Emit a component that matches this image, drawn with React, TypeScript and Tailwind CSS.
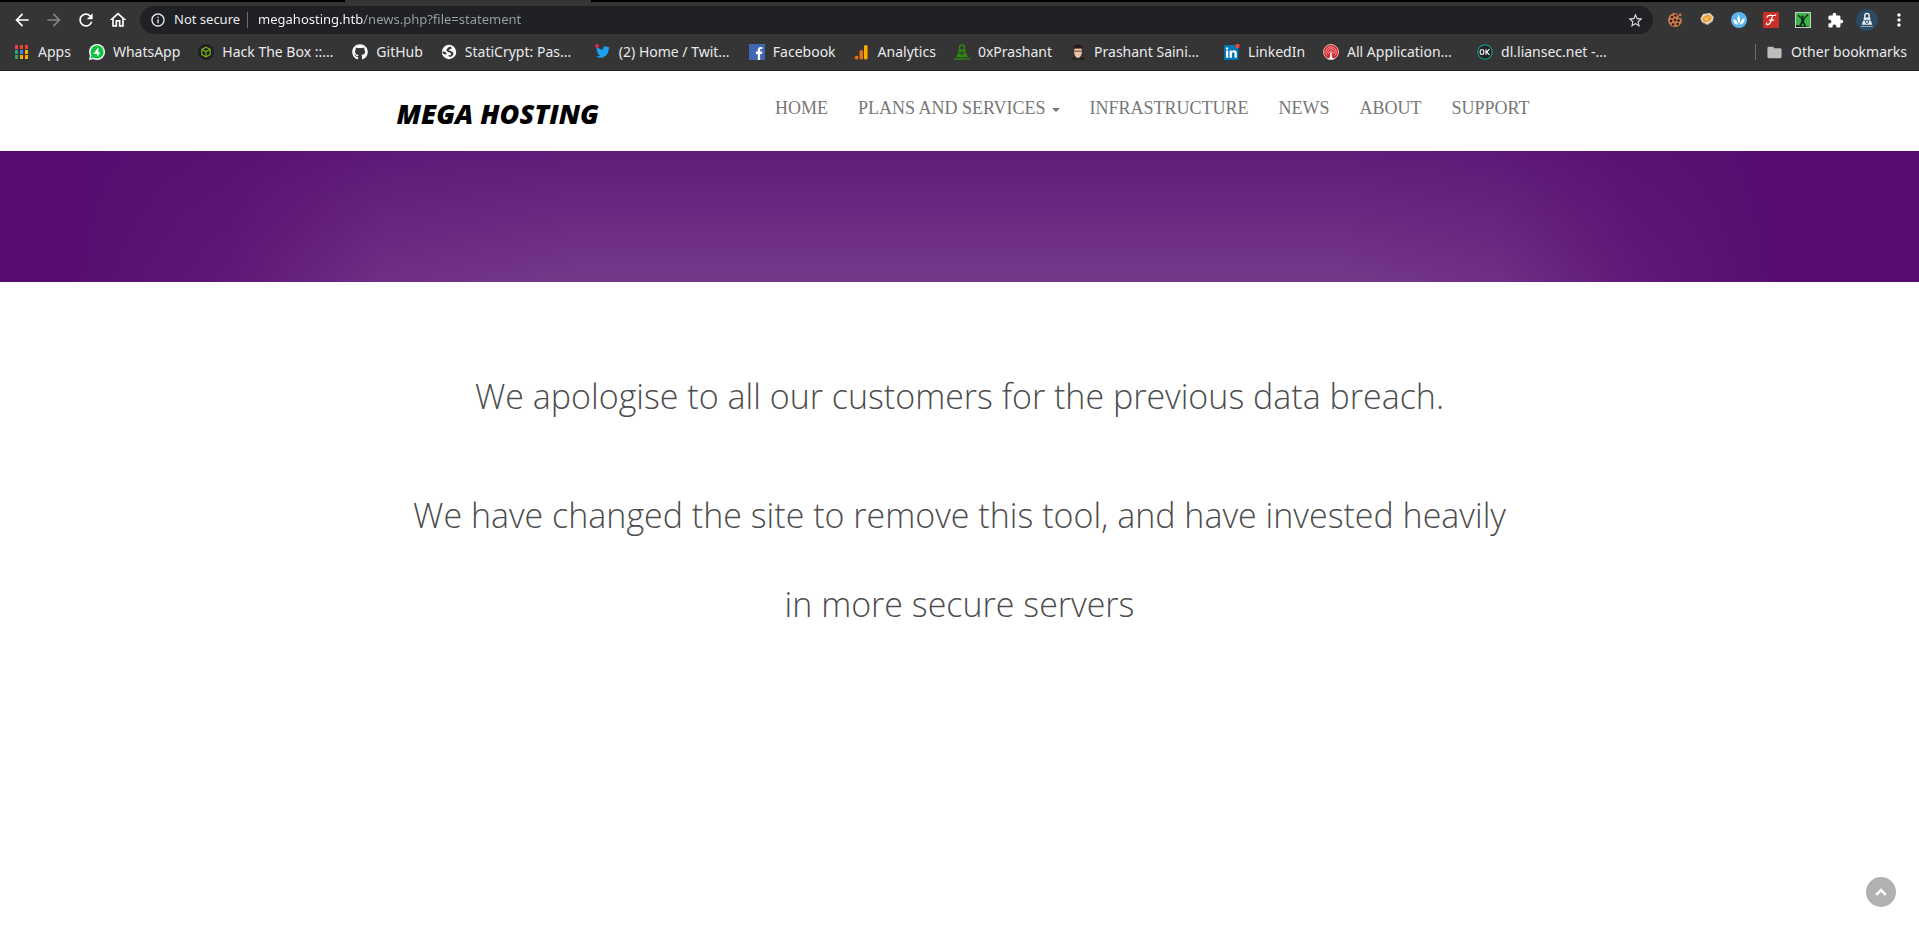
import type { ReactNode } from "react";
import {
  MdArrowBack,
  MdArrowForward,
  MdRefresh,
  MdOutlineHome,
  MdInfoOutline,
  MdStarBorder,
  MdExtension,
  MdMoreVert,
  MdFolder,
} from "react-icons/md";
import { FaGithub, FaTwitter } from "react-icons/fa";

function AppsIcon() {
  const cells = ["#ea4335", "#ea4335", "#ea4335", "#34a06b", "#4285f4", "#fbad05", "#34a06b", "#fbad05", "#fbad05"];
  return (
    <svg width="16" height="16" viewBox="0 0 16 16">
      {cells.map((c, i) => (
        <rect key={i} x={1 + (i % 3) * 5} y={1 + Math.floor(i / 3) * 5} width="3" height="4" fill={c} />
      ))}
    </svg>
  );
}

function WhatsAppIcon() {
  return (
    <svg width="16" height="16" viewBox="0 0 16 16">
      <circle cx="8" cy="8" r="8" fill="#fff" />
      <path d="M0 16l1-5 4 4z" fill="#fff" />
      <circle cx="8.1" cy="7.9" r="6.6" fill="#12c245" />
      <path d="M1.5 14.6l.8-3.6 2.6 2.8z" fill="#12c245" />
      <path d="M9.3 4.5L6 9.3h4.7M9 7.2v4.2" fill="none" stroke="#fff" strokeWidth="1.6" />
    </svg>
  );
}

function HackTheBoxIcon() {
  return (
    <svg width="16" height="16" viewBox="0 0 16 16">
      <circle cx="8" cy="8" r="8" fill="#1a212b" />
      <path d="M8 3.2l4.2 2.2v5.2L8 12.8l-4.2-2.2V5.4zM3.8 5.4L8 7.6l4.2-2.2M8 7.6v5.2" fill="none" stroke="#86b300" strokeWidth="1.1" />
    </svg>
  );
}

function GlobeIcon() {
  return (
    <svg width="16" height="16" viewBox="0 0 16 16">
      <circle cx="8" cy="8" r="7.2" fill="#fff" />
      <path d="M9.800 2.600L7.600 3.200 5.400 5.600l.6 2 2.600.8 1.800 1.200-1 1.600H7.200l.8 1.600 2.400-.4 2-2-.2-2-2.400-1.400-2-.4.4-1.200 2.400-.6z" fill="#353535" />
      <path d="M1.400 7.200l3 .8 1.600 2-1.600.6-2.600-1z" fill="#353535" />
    </svg>
  );
}

function TwitterIcon() {
  return (
    <span className="relative flex h-4 w-4 items-center justify-center">
      <FaTwitter size={14} color="#1da1f2" />
      <span className="absolute left-0 top-0 h-1 w-1 rounded-full bg-[#e0245e]" />
    </span>
  );
}

function FacebookIcon() {
  return (
    <svg width="16" height="16" viewBox="0 0 16 16">
      <rect width="16" height="16" fill="#4267b2" />
      <path d="M8.8 16V10H6.9V7.6h1.9V5.9c0-2 1.2-3 2.9-3 .8 0 1.5.1 1.7.1v2h-1.2c-.9 0-1.1.4-1.1 1.1v1.5h2.2L13 10h-1.9v6z" fill="#fff" />
    </svg>
  );
}

function AnalyticsIcon() {
  return (
    <svg width="16" height="16" viewBox="0 0 16 16">
      <circle cx="2.600" cy="13.600" r="1.900" fill="#e8710a" />
      <rect x="5.500" y="6" width="3.600" height="9.500" rx="1.600" fill="#e8710a" />
      <rect x="10" y="1" width="3.600" height="14.500" rx="1.600" fill="#f9ab00" />
    </svg>
  );
}

function LockPersonIcon({ color }: { color: string }) {
  return (
    <svg width="16" height="16" viewBox="0 0 16 16">
      <path d="M5.6 6V3.6a2.4 2.6 0 0 1 4.8 0V6" fill="none" stroke={color} strokeWidth="1.4" />
      <rect x="4.3" y="5.4" width="7.4" height="3.2" rx="1" fill={color} />
      <path d="M3.6 9.200h8.800l1.400 4H2.200z" fill={color} />
      <circle cx="8" cy="9.400" r="1.500" fill="none" stroke="#353535" strokeWidth=".9" />
      <path d="M0 15h16" stroke={color} strokeWidth="1.600" strokeDasharray="1.600 .3" />
    </svg>
  );
}

function PortraitIcon() {
  return (
    <svg width="16" height="16" viewBox="0 0 16 16">
      <path d="M1 16c.4-2.600 3-3 5-3.600h4c2 .6 4.600 1 5 3.600z" fill="#262626" />
      <path d="M4.200 4.500h7.600v4c0 2.500-2 5.500-3.800 5.500s-3.800-3-3.800-5.500z" fill="#f0c0a4" />
      <path d="M3.600 6.500V4C3.600 1.500 5.500.6 8 .6s4.400.9 4.400 3.400v2.500l-.9-2.300h-7z" fill="#2a1d19" />
      <path d="M4.200 7.200h7.600" stroke="#75605a" strokeWidth="1.300" />
    </svg>
  );
}

function LinkedInIcon() {
  return (
    <svg width="16" height="16" viewBox="0 0 16 16">
      <rect x="0" y="1" width="14.500" height="15" fill="#0077b5" />
      <path d="M2 6.500h2.300v7.200H2zM5.600 6.500h2.200v1c.5-.8 1.300-1.200 2.300-1.200 2 0 2.700 1.300 2.700 3.200v4.200h-2.300V10c0-1-.3-1.700-1.200-1.700-1 0-1.400.8-1.400 1.700v3.700H5.600z" fill="#fff" />
      <circle cx="3.100" cy="4.500" r="1.200" fill="#fff" />
      <rect x="11.500" width="4" height="4" rx="1" fill="#f0433a" />
    </svg>
  );
}

function SignalIcon() {
  return (
    <svg width="16" height="16" viewBox="0 0 16 16">
      <circle cx="8" cy="8" r="7.500" fill="#d7282f" stroke="#e8b6b6" />
      <g fill="none" stroke="#f6c9c9" strokeWidth=".7">
        <path d="M4.200 11.600a5.200 5.200 0 1 1 7.600 0" />
        <path d="M5.700 10a3.200 3.200 0 1 1 4.600 0" />
        <circle cx="8" cy="8" r="1.200" />
      </g>
      <path d="M7.400 8.500h1.200l.4 4.800 2.600 2H4.400l2.600-2z" fill="#fff" />
    </svg>
  );
}

function OkIcon() {
  return (
    <svg width="16" height="16" viewBox="0 0 16 16">
      <circle cx="8" cy="8" r="7.200" fill="#222" stroke="#0d9485" strokeWidth="1.200" />
      <rect x="3.200" y="5.700" width="3.600" height="4.600" rx="1.300" fill="none" stroke="#fff" strokeWidth="1.100" />
      <path d="M9 5.200v5.600M12.500 5.200L9.600 8l2.900 2.800" fill="none" stroke="#fff" strokeWidth="1.100" />
    </svg>
  );
}

function CookieIcon() {
  const chips = [[5, 5], [8.500, 3.500], [4, 9], [8, 8], [11.500, 8.500], [6, 12.500], [10.500, 12]];
  return (
    <svg width="16" height="16" viewBox="0 0 16 16">
      <path d="M9.500 1.200A7 7 0 1 0 15 8.500l-.8-2.300-2.400-.2-.3-2.400z" fill="#c77b4e" />
      <circle cx="13.200" cy="2.800" r="1.400" fill="#c77b4e" />
      {chips.map(([x, y]) => (
        <circle key={`${x}-${y}`} cx={x} cy={y} r="1.250" fill="#2d1b12" />
      ))}
    </svg>
  );
}

function BadgeIcon() {
  return (
    <svg width="16" height="16" viewBox="0 0 16 16">
      <path d="M1.500 6.500L4 2l7-1 3.800 4-1.300 4.500-5 3.500-5.500-2.500z" fill="#dfd8cf" />
      <ellipse cx="8" cy="6.500" rx="4.600" ry="3.400" fill="#f29a22" transform="rotate(-25 8 6.500)" />
      <path d="M5.500 8l5-3.200M5.500 5.500l3.500 3" stroke="#fbdca7" strokeWidth="1" />
      <path d="M3.500 10.500l5 2.500 4-3" fill="none" stroke="#8a6a4c" strokeWidth=".9" />
    </svg>
  );
}

function WaveIcon() {
  return (
    <svg width="16" height="16" viewBox="0 0 16 16">
      <circle cx="8" cy="8" r="8" fill="#5bb5ef" />
      <path d="M2.300 7.500c2.400 0 4 1.700 4.800 5.300-3.200-.3-4.800-2.200-4.800-5.300zM7.600 2.800c1.800 2.700 1.800 5.900.6 9.200C6 9 5.800 6 7.600 2.800zM13.700 6.300c0 3.700-1.700 6.100-5 6.500.5-3.300 2.200-5.800 5-6.500z" fill="#fff" />
    </svg>
  );
}

function ScriptFIcon() {
  return (
    <svg width="16" height="16" viewBox="0 0 16 16">
      <rect width="16" height="16" fill="#c93127" />
      <path d="M4 5.500c.2-2 2-2.300 4-2.100 2 .2 3.500.2 4.700-.5M9.500 3.500C8.500 8 8 12.500 4.800 12.700c-1.300 0-1.700-1-1-1.700M6.500 8.200h4.200" fill="none" stroke="#fff" strokeWidth="1.200" strokeLinecap="round" />
    </svg>
  );
}

function RunnerIcon() {
  return (
    <svg width="16" height="16" viewBox="0 0 16 16">
      <rect x=".5" y=".5" width="15" height="15" fill="#3ab54a" stroke="#c7cfc8" />
      <circle cx="7.500" cy="4.600" r="1.200" fill="#102414" />
      <path d="M3 3l3.600 3.600M9 6.600L13 2.500" fill="none" stroke="#102414" strokeWidth="1.200" />
      <path d="M6 6h3.600L9 10l2.600 4.500H9.800L7.600 11.200 6 13.800H4.200L6.300 9.600z" fill="#102414" />
      <path d="M1 15v-2l4 .6 5 .6 5 .8z" fill="#102414" />
    </svg>
  );
}

function ProfileIcon() {
  return (
    <span className="flex h-[22px] w-[22px] items-center justify-center rounded-full bg-[#2c4a62]">
      <svg width="16" height="16" viewBox="0 0 16 16">
        <path d="M5.800 6V3.800a2.200 2.400 0 0 1 4.400 0V6" fill="none" stroke="#fff" strokeWidth="1.300" />
        <rect x="4.600" y="5.400" width="6.800" height="2.600" rx="1" fill="#e6ebef" />
        <path d="M4.200 8.600h7.600l1.500 4.200H2.700z" fill="#e6ebef" />
        <circle cx="8" cy="9.800" r="1.600" fill="#e6ebef" stroke="#2c4a62" />
        <path d="M2 14.500h12" stroke="#b7c3cc" strokeWidth="1.200" strokeDasharray="1.400 .5" />
      </svg>
    </span>
  );
}

function ToolbarButton({ label, children }: { label: string; children: ReactNode }) {
  return (
    <button type="button" aria-label={label} className="flex h-7 w-8 shrink-0 items-center justify-center">
      {children}
    </button>
  );
}

type Bookmark = { label: string; icon: ReactNode; cut?: boolean };

const bookmarks: Bookmark[] = [
  { label: "Apps", icon: <AppsIcon /> },
  { label: "WhatsApp", icon: <WhatsAppIcon /> },
  { label: "Hack The Box ::...", icon: <HackTheBoxIcon />, cut: true },
  { label: "GitHub", icon: <FaGithub size={16} color="#fff" /> },
  { label: "StatiCrypt: Pas...", icon: <GlobeIcon />, cut: true },
  { label: "(2) Home / Twit...", icon: <TwitterIcon />, cut: true },
  { label: "Facebook", icon: <FacebookIcon /> },
  { label: "Analytics", icon: <AnalyticsIcon /> },
  { label: "0xPrashant", icon: <LockPersonIcon color="#2c8a0c" /> },
  { label: "Prashant Saini...", icon: <PortraitIcon />, cut: true },
  { label: "LinkedIn", icon: <LinkedInIcon /> },
  { label: "All Application...", icon: <SignalIcon />, cut: true },
  { label: "dl.liansec.net -...", icon: <OkIcon />, cut: true },
];

function BrowserBar() {
  return (
    <div className="border-b border-[#202124] bg-[#353535] font-['Noto_Sans',sans-serif]">
      <div className="flex h-[2px] bg-black">
        <div className="ml-[18%] w-[246px] bg-[#353535]" />
      </div>
      <div className="flex items-center pl-1.5 pr-1 pt-1">
        <ToolbarButton label="Back"><MdArrowBack size={20} color="#fff" /></ToolbarButton>
        <ToolbarButton label="Forward"><MdArrowForward size={20} color="#858585" /></ToolbarButton>
        <ToolbarButton label="Reload"><MdRefresh size={20} color="#fff" /></ToolbarButton>
        <ToolbarButton label="Home"><MdOutlineHome size={20} color="#fff" /></ToolbarButton>
        <div className="mx-1.5 flex h-7 grow items-center rounded-full bg-[#202124] pl-2.5 pr-0.5 text-[13px]">
          <MdInfoOutline size={16} color="#e8eaed" />
          <label htmlFor="address" className="ml-2 whitespace-nowrap text-[#e8eaed]">Not secure</label>
          <span className="ml-[7px] h-4 w-px bg-[#6b6e72]" />
          <input
            id="address"
            defaultValue="megahosting.htb/news.php?file=statement"
            className="ml-2.5 min-w-0 grow bg-[linear-gradient(90deg,#ffffff_106px,#9aa0a6_106px)] bg-clip-text text-transparent outline-none"
          />
          <ToolbarButton label="Bookmark this page"><MdStarBorder size={17} color="#dadce0" /></ToolbarButton>
        </div>
        <ToolbarButton label="Cookies"><CookieIcon /></ToolbarButton>
        <ToolbarButton label="Badge"><BadgeIcon /></ToolbarButton>
        <ToolbarButton label="Wave"><WaveIcon /></ToolbarButton>
        <ToolbarButton label="Script"><ScriptFIcon /></ToolbarButton>
        <ToolbarButton label="Runner"><RunnerIcon /></ToolbarButton>
        <ToolbarButton label="Extensions"><MdExtension size={17} color="#fff" /></ToolbarButton>
        <ToolbarButton label="Profile"><ProfileIcon /></ToolbarButton>
        <ToolbarButton label="Menu"><MdMoreVert size={20} color="#fff" /></ToolbarButton>
      </div>
      <div className="flex h-9 items-center pl-3.5 pr-3 text-sm text-[#e8eaed]">
        <nav aria-label="Bookmarks" className="flex grow items-center gap-[18px]">
          {bookmarks.map((b) => (
            <a key={b.label} href="#" className="flex items-center gap-2 whitespace-nowrap">
              <span className="w-4">{b.icon}</span>
              <span className={b.cut ? "w-28" : ""}>{b.label}</span>
            </a>
          ))}
        </nav>
        <a href="#" className="flex items-center whitespace-nowrap">
          <span className="mr-2.5 h-4 w-px bg-[#6b6b6b]" />
          <MdFolder size={17} color="#bdbdbd" />
          <span className="ml-2">Other bookmarks</span>
        </a>
      </div>
    </div>
  );
}

const links = ["HOME", "PLANS AND SERVICES", "INFRASTRUCTURE", "NEWS", "ABOUT", "SUPPORT"];

function SiteHeader() {
  return (
    <header className="mx-auto flex h-20 w-full max-w-[1170px] items-start justify-between pl-[22px]">
      <a href="#" className="mt-[25px] whitespace-nowrap font-['Open_Sans',sans-serif] text-[27px] font-extrabold italic leading-9 text-black">
        MEGA HOSTING
      </a>
      <nav className="mt-[27px] flex font-['Liberation_Serif',serif] text-lg leading-5 text-[#777777]">
        {links.map((l) => (
          <a key={l} href="#" className="flex items-center whitespace-nowrap px-[15px]">
            {l}
            {l === "PLANS AND SERVICES" && (
              <svg width="8" height="4" viewBox="0 0 8 4" className="ml-1.5 mt-1" fill="#777777">
                <path d="M0 0h8L4 4z" />
              </svg>
            )}
          </a>
        ))}
      </nav>
    </header>
  );
}

export default function App() {
  return (
    <div className="flex min-h-screen flex-col bg-white">
      <BrowserBar />
      <SiteHeader />
      <div className="h-[131px] bg-[linear-gradient(90deg,#560c70_0%,#560c70_3%,#560c70b8_12%,#560c7030_20%,#560c7000_30%,#560c7000_70%,#560c7030_78%,#560c70b0_85%,#560c70_93%),linear-gradient(180deg,#5f1c79,#753889)]" />
      <main className="mx-auto max-w-[1120px] grow pt-[70px] text-center font-['Open_Sans',sans-serif] text-[34px] font-light leading-[89px] text-[#4d4d4d]">
        <p>We apologise to all our customers for the previous data breach.</p>
        <p className="mt-[30px]">We have changed the site to remove this tool, and have invested heavily in more secure servers</p>
      </main>
      <button
        type="button"
        aria-label="Back to top"
        className="fixed bottom-[18px] right-[23px] flex h-[30px] w-[30px] items-center justify-center rounded-full bg-[#b1b1b1]"
      >
        <svg width="12" height="8" viewBox="0 0 12 8" fill="none" stroke="#fff" strokeWidth="2.600">
          <path d="M1.200 6.800L6 2l4.800 4.800" />
        </svg>
      </button>
    </div>
  );
}
